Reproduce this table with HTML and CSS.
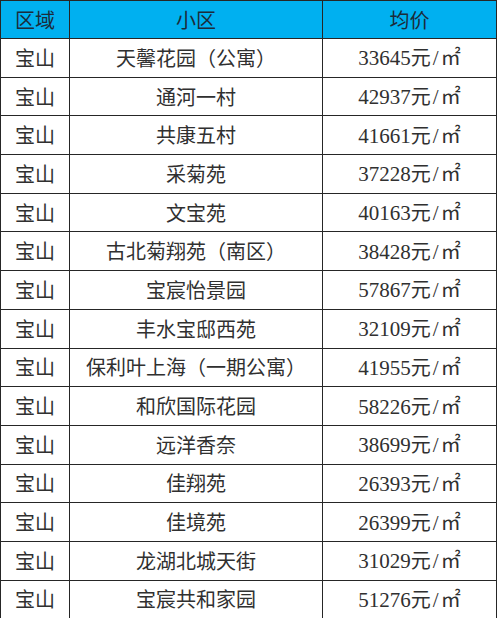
FILE: index.html
```html
<!DOCTYPE html>
<html lang="zh">
<head>
<meta charset="utf-8">
<link rel="stylesheet" href="styles.css">
</head>
<body>
<table class="price-table">
  <colgroup>
    <col class="c-area">
    <col class="c-name">
    <col class="c-price">
  </colgroup>
  <thead>
    <tr><th>区域</th><th>小区</th><th>均价</th></tr>
  </thead>
  <tbody>
    <tr><td>宝山</td><td>天馨花园（公寓）</td><td class="num"><span class="d">33645</span>元<span class="d sl">/</span>㎡</td></tr>
    <tr><td>宝山</td><td>通河一村</td><td class="num"><span class="d">42937</span>元<span class="d sl">/</span>㎡</td></tr>
    <tr><td>宝山</td><td>共康五村</td><td class="num"><span class="d">41661</span>元<span class="d sl">/</span>㎡</td></tr>
    <tr><td>宝山</td><td>采菊苑</td><td class="num"><span class="d">37228</span>元<span class="d sl">/</span>㎡</td></tr>
    <tr><td>宝山</td><td>文宝苑</td><td class="num"><span class="d">40163</span>元<span class="d sl">/</span>㎡</td></tr>
    <tr><td>宝山</td><td>古北菊翔苑（南区）</td><td class="num"><span class="d">38428</span>元<span class="d sl">/</span>㎡</td></tr>
    <tr><td>宝山</td><td>宝宸怡景园</td><td class="num"><span class="d">57867</span>元<span class="d sl">/</span>㎡</td></tr>
    <tr><td>宝山</td><td>丰水宝邸西苑</td><td class="num"><span class="d">32109</span>元<span class="d sl">/</span>㎡</td></tr>
    <tr><td>宝山</td><td>保利叶上海（一期公寓）</td><td class="num"><span class="d">41955</span>元<span class="d sl">/</span>㎡</td></tr>
    <tr><td>宝山</td><td>和欣国际花园</td><td class="num"><span class="d">58226</span>元<span class="d sl">/</span>㎡</td></tr>
    <tr><td>宝山</td><td>远洋香奈</td><td class="num"><span class="d">38699</span>元<span class="d sl">/</span>㎡</td></tr>
    <tr><td>宝山</td><td>佳翔苑</td><td class="num"><span class="d">26393</span>元<span class="d sl">/</span>㎡</td></tr>
    <tr><td>宝山</td><td>佳境苑</td><td class="num"><span class="d">26399</span>元<span class="d sl">/</span>㎡</td></tr>
    <tr><td>宝山</td><td>龙湖北城天街</td><td class="num"><span class="d">31029</span>元<span class="d sl">/</span>㎡</td></tr>
    <tr><td>宝山</td><td>宝宸共和家园</td><td class="num"><span class="d">51276</span>元<span class="d sl">/</span>㎡</td></tr>
  </tbody>
</table>
</body>
</html>
```
FILE: styles.css
```css
html, body {
  margin: 0;
  padding: 0;
  background: #ffffff;
}
body {
  font-family: "Noto Sans CJK SC", "Noto Sans", sans-serif;
  color: #303030;
}
.price-table {
  border-collapse: collapse;
  table-layout: fixed;
  width: 496px;
}
.c-area { width: 69px; }
.c-name { width: 253px; }
.c-price { width: 174px; }
.price-table th,
.price-table td {
  border: 1px solid #262626;
  text-align: center;
  vertical-align: middle;
  padding: 0;
  font-size: 20px;
  font-weight: 400;
  line-height: 24px;
  white-space: nowrap;
  overflow: hidden;
}
.price-table thead tr {
  height: 38px;
}
.price-table tbody tr {
  height: 38.7px;
}
.price-table th {
  background: #00b0f0;
  color: #1c2b3a;
}
.num .d {
  font-family: "Times New Roman", "Liberation Serif", "DejaVu Serif", serif;
  font-size: 21px;
}
.sl {
  padding: 0 2px;
}
```
